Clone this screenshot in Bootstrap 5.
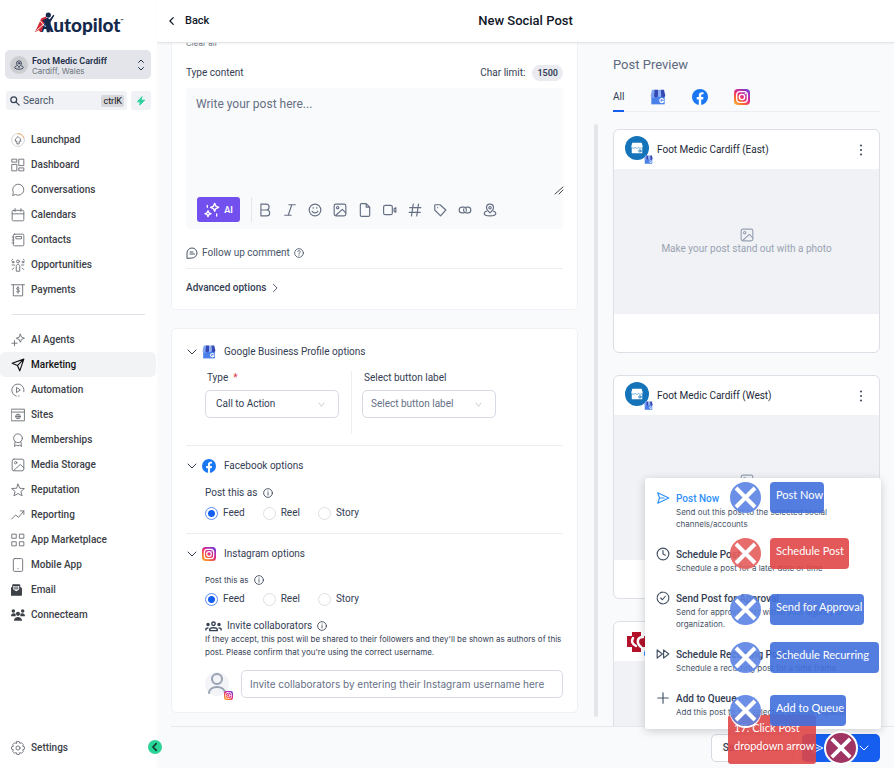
<!DOCTYPE html>
<html lang="en">
<head>
<meta charset="utf-8">
<meta name="viewport" content="width=device-width, initial-scale=1">
<title>New Social Post</title>
<link href="https://cdn.jsdelivr.net/npm/bootstrap@5.3.0/dist/css/bootstrap.min.css" rel="stylesheet">
<style>
:root{--ink:#344054;--muted:#667085;--line:#eceef1;--edge:#d6dae2;--brand:#155eef}
body{font-family:Roboto,"Liberation Sans",sans-serif;font-size:10px;line-height:14px;color:var(--ink);background:#f9fafb;overflow:hidden}
svg{fill:none;stroke:currentColor;stroke-width:2;stroke-linecap:round;stroke-linejoin:round;flex:none}
button,input,select,textarea{font-family:inherit}
a{color:inherit;text-decoration:none}
.i10{width:10px;height:10px}.i12{width:12px;height:12px}.i14{width:14px;height:14px}.i16{width:16px;height:16px}
.thin{stroke-width:1}.thick{stroke-width:4}.semi{stroke-width:3}
.fine{font-family:Inter,Roboto,sans-serif;font-size:8px;line-height:12px}
/* sidebar */
.side{width:157px;background:#fff;color:#3c4047}
.logo{height:50px;padding:9px 0 0 40px;font:900 19px/32px Lato,sans-serif;color:#14284b}
.logo svg{left:34px;top:11px;width:24px;height:23px}
.logo sup{font-size:4px;top:-10px}
.acct{margin:0 6px 0 5px;padding:0 6px 0 5px;height:29px;background:#e4e5ea;border-radius:5px;border:0;color:#23304a}
.acct .pin{width:18px;height:18px;background:#cccdd1}
.acct b{font-size:9px;font-weight:600;line-height:12px}
.finder{margin:12px 6px 17px;gap:4px}
.finder label{height:19px;background:#f1f2f5;border-radius:3px;padding:0 3px 0 4px;color:#344054}
.finder input{font-size:10px;min-width:0;width:40px;padding:0 0 0 3px;border:0;background:none}
.finder input::placeholder{color:#475467;opacity:1}
.finder kbd{font:9px/12px Roboto,sans-serif;background:#d6d8dc;color:#111;border-radius:2px;padding:0 2px}
.bolt{width:20px;height:19px;background:#f1f2f5;border:0;border-radius:3px;color:#2bd09b}
.menu a{height:25px;padding-left:11px;gap:6px;font-weight:500;border-radius:5px;margin-right:1px}
.menu a svg{width:14px;height:14px;color:#6f7278;stroke-width:1.6}
.menu a.on{background:#f2f3f5;color:#101214}
.menu a.on svg{color:#101214;stroke-width:2}
.rule{height:1px;background:#dfe2e8;margin:12px 12px}
.tuck{width:14px;height:14px;right:-5px;bottom:14px;background:#2bd397;color:#103a30;border:0;z-index:3}
/* header and body */
.top{height:43px;background:#fff;border-bottom:1px solid #e3e5ea;box-shadow:0 1px 2px #0000000d;z-index:2;color:#101828}
.top h1{font-size:13px;line-height:16px;font-weight:500}
.back{left:10px;font-size:11px;font-weight:500;background:none;border:0;padding:0;color:inherit}
.form-col{padding-left:14px;flex:1}
.pane{background:#fff;border:1px solid #eff1f4;border-radius:5px;padding:0 14px 14px}
.first{margin-top:-16px;padding:10px 14px 14px;margin-bottom:18px;border-top:0}
.count{margin:16px 0 7px}
.chip{font-size:9px;font-weight:600;line-height:16px;padding:0 5px;border-radius:8px;background:#e9ebf0;margin-left:3px}
.editor{background:#f9fafb;border-radius:4px;height:141px}
.editor textarea{height:109px;font-size:12px;line-height:16px;border:0;background:none;padding:8px 10px;resize:none;color:var(--ink)}
.editor textarea::placeholder,.box::placeholder{color:var(--muted);opacity:1}
.grip{right:-1px;top:97px;color:#444}
.ai{width:43px;height:25px;background:#7150ee;color:#fff;border:0;border-radius:3px;font-size:9px;font-weight:600}
.tools{padding-left:11px;color:var(--muted)}
.tools .bar{width:1px;height:25px;background:#e3e6eb;margin:0 0 0 11px}
.tools .t{width:25px;height:25px;border:0;background:none;padding:0;color:inherit}
.follow{margin:17px 0 8px;color:#475467}
.adv{font-size:10px;line-height:14px;margin-top:12px;font-weight:500;color:inherit}
.box{height:28px;border:1px solid var(--edge);border-radius:5px;font-size:10px;line-height:14px;color:var(--ink);background-color:#fff;padding:0 8px}
.wideface{font-family:Inter,Roboto,sans-serif}
.drop{width:134px;padding-left:10px;background-image:url("data:image/svg+xml,%3Csvg xmlns='http://www.w3.org/2000/svg' viewBox='0 0 10 10'%3E%3Cpath d='M2 3l3 4 3-4' fill='none' stroke='%23c3c7cf'/%3E%3C/svg%3E");background-size:9px;background-position:right 12px center}
.drop.unset{color:var(--muted);padding-left:8px}
.hr1{height:1px;background:var(--line)}
.vr1{width:1px;background:var(--line);margin:0 10px 0 12px}
.opt{gap:4px;margin-top:13px}
.picks{margin:12px 0 11px}
.picks label{padding-left:2px;margin-bottom:5px}
.picks .kind{padding-bottom:16px}
.sub{padding-left:19px}
.ask{margin-top:13px;gap:6px}
.rad{width:13px;height:13px;margin:0 5px 0 0;border:1px solid #dcdfe5}
.rad:checked{background:radial-gradient(circle,#155eef 0 3px,#fff 4px);border-color:#5b8dfa}
.radios{margin:6px 0 13px}
.radios label{margin-right:18px}
.invite{gap:5px}
.about{line-height:13px;margin-bottom:11px}
.face{width:24px;height:24px;background:#f2f4f7;color:#98a2b3}
.tag{right:-4px;bottom:-4px;width:9px;height:9px}
/* preview */
.track{width:4px;margin:81px 15px 9px 16px;background:#e4e6ea;border-radius:2px}
.prev{width:281px;padding-right:14px}
.prev h2{font-size:13px;line-height:16px;font-weight:400;color:#5d6980;margin:14px 0 13px}
.tabs{height:26px;gap:26px;border-bottom:1px solid var(--line);margin-bottom:17px}
.tabs button{height:26px;border:0;background:none;padding:0 0 4px;color:inherit;display:flex;align-items:center}
.tabs .on{border-bottom:2px solid var(--brand);padding-bottom:2px}
.post{background:#fff;border:1px solid #dcdfe5;border-radius:6px;margin-bottom:22px;height:224px;flex:none;overflow:hidden}
.post header{height:39px;padding:0 12px 0 11px;color:#1d2939}
.post header .i12{color:#475467}
.shop{width:24px;height:24px;background:#1573b9;color:#fff;margin-bottom:4px}
.shot{height:145px;background:#f1f2f5;color:#98a2b3}
.foot{height:42px;margin-left:14px;border-top:1px solid #e6e8ec;padding:0 14px 0 0;gap:8px}
.foot .btn{height:28px;font-size:10px;font-weight:500;line-height:14px;border-radius:5px;padding:0 9px}
.later{width:83px;background:#fff;border:1px solid var(--edge);color:var(--ink)}
.go{width:78px;background:var(--brand);color:#fff}
.pop{right:13px;bottom:39px;width:236px;padding:13px 11px 11px;gap:17px;border-radius:3px;border:0;box-shadow:0 2px 10px #10182833;z-index:4;display:flex}
.pop button{border:0;background:none;padding:0;gap:6px;color:#475467}
.pop b{font-weight:500;line-height:15px;color:var(--ink)}
.pop .hot{color:#2e90fa}
.pop .fine{color:#475467}
/* guide marks */
.note{z-index:6;left:770px;height:31px;border-radius:4px;background:#4070dde6;color:#fff;font:11px/14px Lato,sans-serif;padding:6px 0 0 6px;white-space:nowrap}
.note.red{background:#e04646e6}
.hit{z-index:7;left:730px;width:31px;height:31px;border-radius:50%;background:#5b83e3e6;color:#fff}
.hit.red{background:#e45c5ce6}
.hit svg{width:31px;height:31px;stroke-width:4;stroke-linecap:butt}
.y1{top:482px}.y2{top:538px}.y3{top:594px}.y4{top:642px}.y5{top:695px}
.note.y1{width:54px}.note.y2{width:79px}.note.y3{width:94px}.note.y4{width:109px}.note.y5{width:76px}
.note.wide{left:728px;top:715px;width:88px;height:49px;line-height:18px;border-radius:3px;z-index:5;padding-top:4px}
.hit.last{left:824px;top:731px;width:34px;height:34px;background:#a03564;border:2px solid #fff}
.last svg{width:30px;height:30px}
.ringed{box-shadow:0 2px 0 #fff}
</style>
<script src="https://cdn.jsdelivr.net/npm/bootstrap@5.3.0/dist/js/bootstrap.bundle.min.js"></script>
</head>
<body class="vh-100 d-flex position-relative">
<svg width="0" height="0" class="position-absolute" aria-hidden="true">
<defs>
<linearGradient id="ig" x1="0" y1="1" x2=".8" y2="0"><stop stop-color="#ffc23d"/><stop offset=".3" stop-color="#fb6b2a"/><stop offset=".6" stop-color="#e0298a"/><stop offset="1" stop-color="#7a3ad6"/></linearGradient>
<symbol id="down" viewBox="0 0 24 24"><path d="M4 8l8 8 8-8"/></symbol>
<symbol id="left" viewBox="0 0 24 24"><path d="M15 4l-8 8 8 8"/></symbol>
<symbol id="right" viewBox="0 0 24 24"><path d="M8 3l9 9-9 9"/></symbol>
<symbol id="pin" viewBox="0 0 24 24"><path d="M12 17c3-3 6-6 6-9a6 6 0 0 0-12 0c0 3 3 6 6 9z"/><circle cx="12" cy="8" r="2"/><path d="M6 14c-3 1-4 2-4 4 0 3 4 4 10 4s10-1 10-4c0-2-1-3-4-4"/></symbol>
<symbol id="photo" viewBox="0 0 24 24"><rect x="2" y="2" width="20" height="20" rx="3"/><circle cx="8" cy="8" r="2"/><path d="M5 21l11-10 6 6"/></symbol>
<symbol id="info" viewBox="0 0 24 24"><circle cx="12" cy="12" r="10.500"/><path d="M12 11v6M12 7v.5"/></symbol>
<symbol id="clock" viewBox="0 0 24 24"><circle cx="12" cy="12" r="10"/><path d="M12 6v6l4 2"/></symbol>
<symbol id="send" viewBox="0 0 24 24"><path d="M3 3l19 9-19 9 3-9zM6 12h8"/></symbol>
<symbol id="cross" viewBox="0 0 31 31"><path d="M6 6l19 19M25 6L6 25"/></symbol>
<symbol id="fb" viewBox="0 0 24 24"><circle cx="12" cy="12" r="12" fill="#1877f2" stroke="none"/><path d="M10.200 24v-8.300H7.100v-3.600h3.100V9.600c0-3.200 1.900-4.900 4.600-4.900 1.300 0 2.500.2 2.500.2v3h-1.500c-1.500 0-2 .9-2 1.900v2.300h3.400l-.5 3.600h-2.900V24z" fill="#fff" stroke="none"/></symbol>
<symbol id="insta" viewBox="0 0 24 24"><rect width="24" height="24" rx="6" fill="url(#ig)" stroke="none"/><rect x="4" y="4" width="16" height="16" rx="5" stroke="#fff"/><circle cx="12" cy="12" r="4" stroke="#fff"/><circle cx="17" cy="7" r="1" fill="#fff" stroke="none"/></symbol>
<symbol id="gbp" viewBox="0 0 24 24"><path d="M2 9h20v14H2z" fill="#4a80ea" stroke="none"/><path d="M3 1h6l-1 9a3.500 3.500 0 0 1-7 0z" fill="#7da2f0" stroke="none"/><path d="M7 1h5v9a3.500 3.500 0 0 1-6 1z" fill="#3549b5" stroke="none"/><path d="M12 1h4l1 9a3 3 0 0 1-5 1z" fill="#8fb0f5" stroke="none"/><path d="M16 1h5l2 9a3.500 3.500 0 0 1-6 1z" fill="#3549b5" stroke="none"/><path d="M20 15.500a3 3 0 1 0 .5 3H18" stroke="#fff" stroke-width="1.800"/></symbol>
<symbol id="store" viewBox="0 0 24 24"><path d="M4 3h16l2 7-1 2v9H3v-9l-1-2z" fill="#fff" stroke="none"/><path d="M3 11c2 2 4 2 6 0 2 2 4 2 6 0 2 2 4 2 6 0" stroke="#1573b9" stroke-width="1"/><circle cx="17" cy="17" r="2" stroke="#1573b9" stroke-width="1.500"/></symbol>
<symbol id="spark" viewBox="0 0 24 24"><path d="M16 2l1.800 4.200L22 8l-4.200 1.800L16 14l-1.800-4.200L10 8l4.200-1.800zM6 13l1.300 3.200L10.500 17.500l-3.200 1.300L6 22l-1.300-3.200L1.500 17.500l3.200-1.300zM5 5v3M19 18v3"/></symbol>
<symbol id="people" viewBox="0 0 24 16"><circle cx="12" cy="4" r="2.500"/><path d="M6.500 14v-2c1-3 10-3 11 0v2z"/><circle cx="4" cy="5" r="1.500" fill="currentColor"/><circle cx="20" cy="5" r="1.500" fill="currentColor"/><path d="M1 13v-2l3-1M23 13v-2l-3-1"/></symbol>
<symbol id="dots" viewBox="0 0 24 24"><g fill="currentColor" stroke="none"><circle cx="12" cy="3" r="2.200"/><circle cx="12" cy="12" r="2.200"/><circle cx="12" cy="21" r="2.200"/></g></symbol>
</defs></svg>

<nav class="side d-flex flex-column position-relative flex-shrink-0" aria-label="Main">
 <div class="logo position-relative">Autopilot<sup>™</sup><svg class="position-absolute" viewBox="0 0 26 23"><path d="M1 22L8 7l5-2 2 5-4 2-3 10-3-2z" fill="#d42a35" stroke="none"/><path d="M3 20l8-7M7 10l4 5" stroke="#fff" stroke-width="1"/><circle cx="15.500" cy="3.500" r="2.800" fill="#14284b" stroke="none"/><path d="M9 9l5-2 3 1 4-5 1 1-4 7-1 11h-3l-2-9z" fill="#14284b" stroke="none"/></svg></div>
 <button class="acct d-flex align-items-center text-start" type="button">
  <span class="pin rounded-circle d-flex align-items-center justify-content-center"><svg class="i10"><use href="#pin"/></svg></span>
  <span class="d-flex flex-column ms-1 flex-grow-1"><b>Foot Medic Cardiff</b><span class="fine lh-1 text-secondary">Cardiff, Wales</span></span>
  <svg width="8" height="12" viewBox="0 0 16 24"><path d="M3 7l5-5 5 5M3 17l5 5 5-5"/></svg>
 </button>
 <div class="finder d-flex">
  <label class="d-flex align-items-center flex-grow-1"><svg class="i10 semi" viewBox="0 0 24 24"><circle cx="9" cy="9" r="7"/><path d="M14 14l8 8"/></svg><input class="flex-grow-1" type="text" placeholder="Search" aria-label="Search"><kbd>ctrlK</kbd></label>
  <button class="bolt d-flex align-items-center justify-content-center p-0" type="button" aria-label="Quick actions"><svg class="i10" viewBox="0 0 24 24"><path d="M14 2L3 14h7l-1 8 12-12h-8z" fill="currentColor"/></svg></button>
 </div>
 <div class="menu d-flex flex-column">
  <a class="d-flex align-items-center" href="#"><svg viewBox="0 0 24 24"><circle cx="12" cy="12" r="11" stroke="#cfd1d5"/><path d="M12 1a11 11 0 0 1 10 7" stroke="#f5a65b"/><path d="M10 18v-4H7l1-4 4-4 4 4 1 4h-3v4z"/></svg>Launchpad</a>
  <a class="d-flex align-items-center" href="#"><svg viewBox="0 0 24 24"><path d="M2 2h8v5H2zM2 11h8v11H2zM14 2h8v11h-8zM14 17h8v5h-8z"/></svg>Dashboard</a>
  <a class="d-flex align-items-center" href="#"><svg viewBox="0 0 24 24"><path d="M3 21l1-5a9.500 9.500 0 1 1 4 4z"/></svg>Conversations</a>
  <a class="d-flex align-items-center" href="#"><svg viewBox="0 0 24 24"><rect x="2" y="4" width="20" height="18" rx="2"/><path d="M2 10h20M7 1v5M17 1v5"/></svg>Calendars</a>
  <a class="d-flex align-items-center" href="#"><svg viewBox="0 0 24 24"><rect x="4" y="2" width="18" height="20" rx="2"/><path d="M9 6h9v4H9zM2 7h3M2 12h3M2 17h3"/></svg>Contacts</a>
  <a class="d-flex align-items-center" href="#"><svg viewBox="0 0 24 24"><circle cx="12" cy="6" r="2.500"/><path d="M9 22v-8c0-4 6-4 6 0v8z"/><circle cx="3.500" cy="7" r="1.500"/><circle cx="20.500" cy="7" r="1.500"/><path d="M1 4l2-2M23 4l-2-2M2 12h4M18 12h4M2 20l3-3M22 20l-3-3"/></svg>Opportunities</a>
  <a class="d-flex align-items-center" href="#"><svg viewBox="0 0 24 24"><path d="M1 3h22M4 3v19h16V3M14.500 9c-1-2-5-1.500-5 .5 0 3 5 1.500 5 4.500 0 2-4 2.500-5 .5M12 6.500v11"/></svg>Payments</a>
  <div class="rule"></div>
  <a class="d-flex align-items-center" href="#"><svg viewBox="0 0 24 24"><path d="M16 2l2 5 5 2-5 2-2 5-2-5-5-2 5-2zM6 13v9M1.500 17.500h9"/></svg>AI Agents</a>
  <a class="on d-flex align-items-center" href="#" aria-current="page"><svg viewBox="0 0 24 24"><path d="M2 9l20-7-7 20-4-9zM11 13L22 2"/></svg>Marketing</a>
  <a class="d-flex align-items-center" href="#"><svg viewBox="0 0 24 24"><path d="M22 15a10.500 10.500 0 1 0-13 7.500"/><path d="M10 8l6 4-6 4zM13 22.500l1-.2"/></svg>Automation</a>
  <a class="d-flex align-items-center" href="#"><svg viewBox="0 0 24 24"><path d="M1 2h22v20H1zM1 7h22"/><circle cx="12" cy="14.500" r="4"/><path d="M8 14.500h8M12 11v7"/></svg>Sites</a>
  <a class="d-flex align-items-center" href="#"><svg viewBox="0 0 24 24"><circle cx="12" cy="9" r="7.500"/><path d="M7 15l-1 8 3-2 3 1 3-1 3 2-1-8"/></svg>Memberships</a>
  <a class="d-flex align-items-center" href="#"><svg><use href="#photo"/></svg>Media Storage</a>
  <a class="d-flex align-items-center" href="#"><svg viewBox="0 0 24 24"><path d="M12 2l3 7 8 .5-6 5 2 7.500-7-4-7 4 2-7.500-6-5L9 9z"/></svg>Reputation</a>
  <a class="d-flex align-items-center" href="#"><svg viewBox="0 0 24 24"><path d="M1 19l7-7 5 4 9-11M16 5h6v6"/></svg>Reporting</a>
  <a class="d-flex align-items-center" href="#"><svg viewBox="0 0 24 24"><path d="M2 2h7v7H2zM15 2h7v7h-7zM2 15h7v7H2zM15 15h7v7h-7z"/></svg>App Marketplace</a>
  <a class="d-flex align-items-center" href="#"><svg viewBox="0 0 24 24"><rect x="4" y="1" width="16" height="22" rx="2"/><path d="M12 18v.5"/></svg>Mobile App</a>
  <a class="d-flex align-items-center" href="#"><svg viewBox="0 0 24 24"><path d="M0 9l3-3V3h12v3l3 3v12H0z" fill="#3c4047" stroke="#3c4047"/><path d="M4 5h10v6l-5 3-5-3z" fill="#fff" stroke="none"/><path d="M6 7h6M6 10h6" stroke="#3c4047"/></svg>Email</a>
  <a class="d-flex align-items-center" href="#"><svg viewBox="0 0 24 24"><g fill="#3c4047" stroke="none"><circle cx="4" cy="5" r="3"/><circle cx="20" cy="5" r="3"/><circle cx="12" cy="10" r="3.500"/><path d="M0 14c0-6 6-6 8-4v4zM24 14c0-6-6-6-8-4v4zM5 22c0-9 14-9 14 0z"/></g></svg>Connecteam</a>
 </div>
 <div class="menu mt-auto mb-2"><a class="d-flex align-items-center" href="#"><svg viewBox="0 0 24 24"><circle cx="12" cy="12" r="3.500"/><path d="M10 1h4l1 3 3-1 3 3-1 3 3 1v4l-3 1 1 3-3 3-3-1-1 3h-4l-1-3-3 1-3-3 1-3-3-1v-4l3-1-1-3 3-3 3 1z"/></svg>Settings</a></div>
 <button class="tuck position-absolute rounded-circle p-0 d-flex align-items-center justify-content-center" type="button" aria-label="Collapse"><svg class="i10 thick"><use href="#left"/></svg></button>
</nav>

<main class="flex-grow-1 d-flex flex-column position-relative">
 <header class="top d-flex align-items-center justify-content-center position-relative flex-shrink-0">
  <button class="back position-absolute d-flex align-items-center gap-2" type="button"><svg class="i10 semi"><use href="#left"/></svg>Back</button>
  <h1 class="m-0">New Social Post</h1>
 </header>
 <div class="d-flex flex-grow-1 overflow-hidden">
  <div class="form-col">
   <section class="pane first">
    <div class="fine text-secondary">Clear all</div>
    <div class="count d-flex align-items-center justify-content-between"><label for="body">Type content</label><span class="d-flex align-items-center gap-1">Char limit: <span class="chip">1500</span></span></div>
    <div class="editor position-relative">
     <textarea id="body" class="w-100 d-block" placeholder="Write your post here..."></textarea>
     <svg class="grip i10 thin position-absolute" viewBox="0 0 10 10"><path d="M1 9l8-7M5 9l4-4"/></svg>
     <div class="tools d-flex align-items-center">
      <button class="ai d-flex align-items-center justify-content-center p-0 gap-1" type="button"><svg class="i16"><use href="#spark"/></svg>AI</button>
      <span class="bar"></span>
      <button class="t" type="button" aria-label="Bold"><svg class="i14" viewBox="0 0 24 24"><path d="M5 2h9a5 5 0 0 1 0 10H5zM5 12h10a5 5 0 0 1 0 10H5z"/></svg></button>
      <button class="t" type="button" aria-label="Italic"><svg class="i14" viewBox="0 0 24 24"><path d="M10 3h11M3 21h11M15 3L9 21"/></svg></button>
      <button class="t" type="button" aria-label="Emoji"><svg class="i14" viewBox="0 0 24 24"><circle cx="12" cy="12" r="10"/><path d="M7 14c2 4 8 4 10 0M9 8v1M15 8v1"/></svg></button>
      <button class="t" type="button" aria-label="Image"><svg class="i14"><use href="#photo"/></svg></button>
      <button class="t" type="button" aria-label="File"><svg class="i14" viewBox="0 0 24 24"><path d="M14 1H6a2 2 0 0 0-2 2v18a2 2 0 0 0 2 2h12a2 2 0 0 0 2-2V7zM14 1v6h6"/></svg></button>
      <button class="t" type="button" aria-label="Video"><svg class="i14" viewBox="0 0 24 24"><rect x="1" y="4" width="15" height="16" rx="3"/><path d="M19 10l3-2v8l-3-2z"/></svg></button>
      <button class="t" type="button" aria-label="Hashtag"><svg class="i14" viewBox="0 0 24 24"><path d="M9 2L6 22M18 2l-3 20M3 8h19M2 16h19"/></svg></button>
      <button class="t" type="button" aria-label="Tag"><svg class="i14" viewBox="0 0 24 24"><path d="M3 4a1 1 0 0 1 1-1h8l10 9-9 10L3 12zM8 8v.1"/></svg></button>
      <button class="t" type="button" aria-label="Link"><svg class="i14" viewBox="0 0 24 24"><path d="M10 17H7A5 5 0 0 1 7 7h3a5 5 0 0 1 4 7M14 7h3a5 5 0 0 1 0 10h-3a5 5 0 0 1-4-7"/></svg></button>
      <button class="t" type="button" aria-label="Location"><svg class="i14"><use href="#pin"/></svg></button>
     </div>
    </div>
    <div class="follow d-flex align-items-center gap-1"><svg class="i12" viewBox="0 0 24 24"><path d="M2 22V12a10 10 0 1 1 10 10zM8 10h6M8 14h9"/></svg>Follow up comment<svg class="i10" viewBox="0 0 24 24"><circle cx="12" cy="12" r="10.500"/><path d="M9 9c0-4 6-4 6 0 0 2-3 2-3 5M12 17v.5"/></svg></div>
    <div class="hr1"></div>
    <button class="adv btn p-0 border-0 d-flex align-items-center gap-1" type="button">Advanced options<svg class="i10"><use href="#right"/></svg></button>
   </section>

   <section class="pane">
    <div class="pt-1"></div>
    <div class="opt d-flex align-items-center mt-2 pt-1"><svg class="i12"><use href="#down"/></svg><svg class="i14"><use href="#gbp"/></svg><span class="ms-1">Google Business Profile options</span></div>
    <div class="picks sub d-flex">
     <div class="kind"><label for="kind" class="d-block">Type &nbsp;<span class="text-danger">*</span></label><select id="kind" class="form-select box drop"><option>Call to Action</option></select></div>
     <div class="vr1"></div>
     <div><label for="cta" class="d-block">Select button label</label><select id="cta" class="form-select box drop unset"><option>Select button label</option></select></div>
    </div>
    <div class="hr1"></div>
    <div class="opt d-flex align-items-center"><svg class="i12"><use href="#down"/></svg><svg class="i14"><use href="#fb"/></svg><span class="ms-1">Facebook options</span></div>
    <div class="sub">
     <div class="ask d-flex align-items-center">Post this as <svg class="i10"><use href="#info"/></svg></div>
     <div class="radios d-flex"><label class="d-flex align-items-center"><input class="form-check-input rad" type="radio" name="fb" checked>Feed</label><label class="d-flex align-items-center"><input class="form-check-input rad" type="radio" name="fb">Reel</label><label class="d-flex align-items-center"><input class="form-check-input rad" type="radio" name="fb">Story</label></div>
    </div>
    <div class="hr1"></div>
    <div class="opt d-flex align-items-center"><svg class="i12"><use href="#down"/></svg><svg class="i14"><use href="#insta"/></svg><span class="ms-1">Instagram options</span></div>
    <div class="sub">
     <div class="ask fine d-flex align-items-center">Post this as <svg class="i10"><use href="#info"/></svg></div>
     <div class="radios d-flex"><label class="d-flex align-items-center"><input class="form-check-input rad" type="radio" name="ig" checked>Feed</label><label class="d-flex align-items-center"><input class="form-check-input rad" type="radio" name="ig">Reel</label><label class="d-flex align-items-center"><input class="form-check-input rad" type="radio" name="ig">Story</label></div>
     <div class="invite d-flex align-items-center"><svg width="17" height="11"><use href="#people"/></svg>Invite collaborators <svg class="i10"><use href="#info"/></svg></div>
     <p class="fine about">If they accept, this post will be shared to their followers and they'll be shown as authors of this post. Please confirm that you're using the correct username.</p>
     <div class="d-flex align-items-center"><span class="face rounded-circle position-relative me-2"><svg class="d-block" viewBox="0 0 24 24" width="24" height="24"><circle cx="12" cy="7" r="5"/><path d="M4 21c0-8 16-8 16 0"/></svg><svg class="tag position-absolute"><use href="#insta"/></svg></span><input class="form-control box wideface ms-1" type="text" aria-label="Collaborators" placeholder="Invite collaborators by entering their Instagram username here"></div>
    </div>
   </section>
  </div>
  <div class="track flex-shrink-0"></div>
  <aside class="prev d-flex flex-column flex-shrink-0">
   <h2>Post Preview</h2>
   <div class="tabs d-flex flex-shrink-0"><button class="on" type="button">All</button><button type="button" aria-label="Google"><svg class="i16"><use href="#gbp"/></svg></button><button type="button" aria-label="Facebook"><svg class="i16"><use href="#fb"/></svg></button><button type="button" aria-label="Instagram"><svg class="i16"><use href="#insta"/></svg></button></div>
   <article class="post"><header class="d-flex align-items-center"><span class="shop rounded-circle position-relative d-flex align-items-center justify-content-center me-2"><svg class="i14"><use href="#store"/></svg><svg class="tag position-absolute"><use href="#gbp"/></svg></span><span class="flex-grow-1">Foot Medic Cardiff (East)</span><svg class="i12"><use href="#dots"/></svg></header><div class="shot d-flex flex-column align-items-center justify-content-center"><svg class="i14"><use href="#photo"/></svg><span>Make your post stand out with a photo</span></div></article>
   <article class="post"><header class="d-flex align-items-center"><span class="shop rounded-circle position-relative d-flex align-items-center justify-content-center me-2"><svg class="i14"><use href="#store"/></svg><svg class="tag position-absolute"><use href="#gbp"/></svg></span><span class="flex-grow-1">Foot Medic Cardiff (West)</span><svg class="i12"><use href="#dots"/></svg></header><div class="shot d-flex flex-column align-items-center justify-content-center"><svg class="i14"><use href="#photo"/></svg><span>Make your post stand out with a photo</span></div></article>
   <article class="post"><header class="d-flex align-items-center"><span class="position-relative d-flex"><svg width="24" height="24" viewBox="0 0 24 24"><path d="M7 2h9v4h7v11h-7v5H7v-5H2V6h5z" fill="#b3122a" stroke="none"/><path d="M8 8c-2 3-1 6 3 8M18 7c-6 0-7 6-2 10" stroke="#fff" stroke-width="2.500"/></svg><svg class="tag position-absolute"><use href="#fb"/></svg></span></header><div class="shot"></div></article>
  </aside>
 </div>
 <footer class="foot d-flex align-items-center justify-content-end flex-shrink-0">
  <button class="btn later" type="button">Save for later</button>
  <button class="btn go d-flex align-items-center justify-content-between" type="button"><svg class="i12"><use href="#send"/></svg>Post<svg class="i12"><use href="#down"/></svg></button>
 </footer>
</main>

<div class="pop card position-absolute">
 <button class="d-flex text-start" type="button"><svg class="i14 hot"><use href="#send"/></svg><span><b class="d-block hot">Post Now</b><span class="fine d-block">Send out this post to the selected social channels/accounts</span></span></button>
 <button class="d-flex text-start" type="button"><svg class="i14"><use href="#clock"/></svg><span><b class="d-block">Schedule Post</b><span class="fine d-block">Schedule a post for a later date or time</span></span></button>
 <button class="d-flex text-start" type="button"><svg class="i14" viewBox="0 0 24 24"><circle cx="12" cy="12" r="10" stroke-dasharray="6 2"/><path d="M8 12l3 3 5-6"/></svg><span><b class="d-block">Send Post for Approval</b><span class="fine d-block">Send for approval first within your agency or organization.</span></span></button>
 <button class="d-flex text-start" type="button"><svg class="i14" viewBox="0 0 24 24"><path d="M2 5l9 7-9 7zM13 5l9 7-9 7z"/></svg><span><b class="d-block">Schedule Recurring Posts</b><span class="fine d-block">Schedule a recurring post for a time frame</span></span></button>
 <button class="d-flex text-start" type="button"><svg class="i14" viewBox="0 0 24 24"><path d="M12 3v18M3 12h18"/></svg><span><b class="d-block">Add to Queue</b><span class="fine d-block">Add this post to the selected category queue</span></span></button>
</div>

<div class="note y1 position-absolute">Post Now</div><div class="hit y1 position-absolute"><svg><use href="#cross"/></svg></div>
<div class="note red y2 position-absolute">Schedule Post</div><div class="hit red y2 position-absolute"><svg><use href="#cross"/></svg></div>
<div class="note y3 position-absolute">Send for Approval</div><div class="hit y3 position-absolute"><svg><use href="#cross"/></svg></div>
<div class="note y4 position-absolute">Schedule Recurring</div><div class="hit y4 position-absolute"><svg><use href="#cross"/></svg></div>
<div class="note y5 position-absolute">Add to Queue</div><div class="hit ringed y5 position-absolute"><svg><use href="#cross"/></svg></div>
<div class="note red wide position-absolute">17. Click Post<br>dropdown arrow</div>
<div class="hit last position-absolute"><svg><use href="#cross"/></svg></div>
</body>
</html>
